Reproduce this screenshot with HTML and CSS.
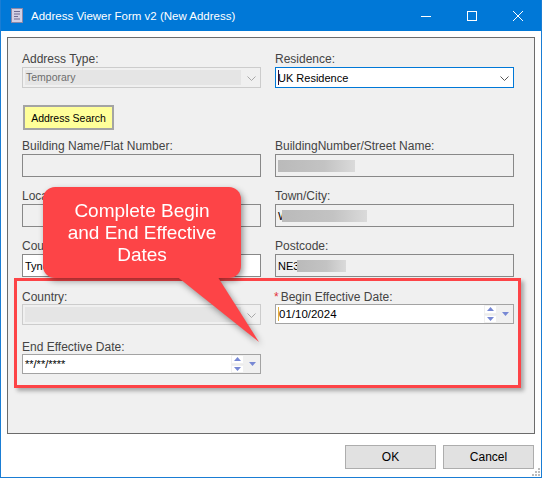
FILE: index.html
```html
<!DOCTYPE html>
<html>
<head>
<meta charset="utf-8">
<link rel="stylesheet" href="styles.css">
</head>
<body>
<div class="window">
  <div class="titlebar">
    <svg class="app-icon" width="12" height="15" viewBox="0 0 12 15">
      <rect x="0.5" y="0.5" width="11" height="14" fill="#d3d0e4" stroke="#8b88a8"/>
      <path d="M3 3.5h6M3 6h6M3 8.5h4M3 11h6" stroke="#6f6b92" stroke-width="1"/>
    </svg>
    <span class="title">Address Viewer Form v2 (New Address)</span>
    <div class="caption">
      <div class="cap-btn"><svg width="10" height="10" viewBox="0 0 10 10"><path d="M0 5.5h10" stroke="#fff"/></svg></div>
      <div class="cap-btn"><svg width="10" height="10" viewBox="0 0 10 10"><rect x="0.5" y="0.5" width="9" height="9" fill="none" stroke="#fff"/></svg></div>
      <div class="cap-btn"><svg width="10" height="10" viewBox="0 0 10 10"><path d="M0 0L10 10M10 0L0 10" stroke="#fff"/></svg></div>
    </div>
  </div>
  <div class="client">
    <div class="panel">
      <div class="row">
        <div class="field">
          <span class="lbl">Address Type:</span>
          <div class="combo disabled">
            <span class="val">Temporary</span>
            <svg class="chev" width="9" height="5" viewBox="0 0 9 5"><path d="M0.5 0.5L4.5 4.5L8.5 0.5" fill="none" stroke="#a8a8a8"/></svg>
          </div>
        </div>
        <div class="field">
          <span class="lbl">Residence:</span>
          <div class="combo active">
            <span class="caret"></span><span class="val">UK Residence</span>
            <svg class="chev" width="9" height="5" viewBox="0 0 9 5"><path d="M0.5 0.5L4.5 4.5L8.5 0.5" fill="none" stroke="#555"/></svg>
          </div>
        </div>
      </div>
      <div class="row r-btn">
        <div class="search-btn">Address Search</div>
      </div>
      <div class="row r-gap9">
        <div class="field">
          <span class="lbl">Building Name/Flat Number:</span>
          <div class="tb"></div>
        </div>
        <div class="field">
          <span class="lbl">BuildingNumber/Street Name:</span>
          <div class="tb"><span class="blur w77"></span></div>
        </div>
      </div>
      <div class="row r-gap12">
        <div class="field">
          <span class="lbl">Locality:</span>
          <div class="tb"></div>
        </div>
        <div class="field">
          <span class="lbl">Town/City:</span>
          <div class="tb">W<span class="blur w85 town"></span></div>
        </div>
      </div>
      <div class="row r-gap12">
        <div class="field">
          <span class="lbl">County:</span>
          <div class="tb white">Tyne and Wear</div>
        </div>
        <div class="field">
          <span class="lbl">Postcode:</span>
          <div class="tb">NE3<span class="blur w49 pc"></span></div>
        </div>
      </div>
      <div class="hl">
        <div class="row">
          <div class="field">
            <span class="lbl">Country:</span>
            <div class="combo disabled">
              <span class="val"></span>
              <svg class="chev" width="9" height="5" viewBox="0 0 9 5"><path d="M0.5 0.5L4.5 4.5L8.5 0.5" fill="none" stroke="#a8a8a8"/></svg>
            </div>
          </div>
          <div class="field">
            <span class="lbl"><span class="req">*</span>Begin Effective Date:</span>
            <div class="dp">
              <div class="txt big"><span class="caret2"></span>01/10/2024</div>
              <div class="spin">
                <div class="sb"><svg width="7" height="4" viewBox="0 0 7 4"><polygon points="3.5,0 7,4 0,4" fill="#7788d4"/></svg></div>
                <div class="sb"><svg width="7" height="4" viewBox="0 0 7 4"><polygon points="0,0 7,0 3.5,4" fill="#7788d4"/></svg></div>
              </div>
              <div class="dd"><svg width="7" height="4" viewBox="0 0 7 4"><polygon points="0,0 7,0 3.5,4" fill="#7788d4"/></svg></div>
            </div>
          </div>
        </div>
        <div class="row r-gap15">
          <div class="field">
            <span class="lbl">End Effective Date:</span>
            <div class="dp">
              <div class="txt">**/**/****</div>
              <div class="spin">
                <div class="sb"><svg width="7" height="4" viewBox="0 0 7 4"><polygon points="3.5,0 7,4 0,4" fill="#7788d4"/></svg></div>
                <div class="sb"><svg width="7" height="4" viewBox="0 0 7 4"><polygon points="0,0 7,0 3.5,4" fill="#7788d4"/></svg></div>
              </div>
              <div class="dd"><svg width="7" height="4" viewBox="0 0 7 4"><polygon points="0,0 7,0 3.5,4" fill="#7788d4"/></svg></div>
            </div>
          </div>
        </div>
      </div>
      <div class="callout">
        <svg class="tail" width="230" height="160" viewBox="0 0 230 160"><polygon points="127,84 171,84 216,155" fill="#fd4447"/></svg>
        <div class="callout-box">Complete Begin<br>and End Effective<br>Dates</div>
      </div>
    </div>
    <div class="actions">
      <div class="btn">OK</div>
      <div class="btn">Cancel</div>
    </div>
    <svg class="grip" width="10" height="10" viewBox="0 0 10 10">
      <rect x="7" y="1" width="2" height="2" fill="#bcbcbc"/>
      <rect x="4" y="4" width="2" height="2" fill="#bcbcbc"/>
      <rect x="7" y="4" width="2" height="2" fill="#bcbcbc"/>
      <rect x="1" y="7" width="2" height="2" fill="#bcbcbc"/>
      <rect x="4" y="7" width="2" height="2" fill="#bcbcbc"/>
      <rect x="7" y="7" width="2" height="2" fill="#bcbcbc"/>
    </svg>
  </div>
</div>
</body>
</html>
```
FILE: styles.css
```css
* { box-sizing: border-box; }
body { margin: 0; font-family: "Liberation Sans", Arial, sans-serif; background: #fff; }

.window {
  width: 542px; height: 478px;
  border: 1px solid #1a7dd4; border-top: 0;
  display: flex; flex-direction: column;
  background: #fff; position: relative;
}
.titlebar {
  height: 31px; background: #0078d7;
  display: flex; align-items: center; flex: 0 0 31px;
}
.app-icon { margin-left: 10px; flex: 0 0 auto; }
.title { margin-left: 8px; color: #fff; font-size: 11.5px; white-space: nowrap; }
.caption { margin-left: auto; display: flex; height: 31px; }
.cap-btn { width: 46px; height: 31px; display: flex; align-items: center; justify-content: center; }

.client { flex: 1; position: relative; }
.panel {
  margin: 6px 0 0 6px;
  width: 528px; height: 397px;
  border: 1px solid #6b6b6b; background: #f0f0f0;
  padding: 14px 20px 0 14px;
  position: relative;
}

.row { display: grid; grid-template-columns: 239px 239px; column-gap: 14px; }
.r-btn { margin-top: 17px; }
.r-gap9 { margin-top: 9px; }
.r-gap12 { margin-top: 12px; }
.r-gap15 { margin-top: 15px; }

.field { display: flex; flex-direction: column; }
.lbl {
  display: block; height: 14px; line-height: 14px;
  font-size: 12px; color: #444; margin-bottom: 1px; white-space: nowrap;
}
.hl .lbl { margin-bottom: 0; }
.req { color: #e3303a; margin-left: -1px; margin-right: 2px; }

.combo { height: 21px; border: 1px solid; display: flex; align-items: center; position: relative; }
.combo .chev { position: absolute; right: 4px; top: 8px; }
.combo.disabled { border-color: #cccccc; background: #f0f0f0; }
.combo.disabled .val {
  margin: 2px; width: 216px; height: 15px; background: #e5e5e5;
  font-size: 10.5px; color: #6d6d6d; line-height: 15px; padding-left: 1px;
}
.combo.active { border-color: #0078d7; background: #fff; padding-left: 2px; }
.combo.active .val { font-size: 11px; color: #000; }
.caret { width: 1px; height: 15px; background: #2a1040; margin-right: -1px; }

.search-btn {
  width: 91px; height: 25px; margin-left: 1px;
  background: #ffff99; border: 2px solid #a4a4a4;
  font-size: 10.5px; color: #000;
  display: flex; align-items: center; justify-content: center;
}

.tb {
  height: 23px; border: 1px solid #888; background: #f0f0f0;
  display: flex; align-items: center; padding-left: 2px;
  font-size: 11px; color: #000; white-space: nowrap; overflow: hidden;
}
.tb.white { background: #fff; }
.blur { display: inline-block; height: 12px; background: linear-gradient(90deg, #bababa, #c3c3c3 60%, #dadada); }
.w77 { width: 77px; }
.w85 { width: 85px; }
.w49 { width: 49px; }
.town { margin-left: -6px; }
.pc { margin-left: -2px; }

.hl {
  margin: 1px -7px 0 -8px;
  border: 3px solid #fd4447;
  padding: 9px 4px 11px 5px;
  box-shadow: 3px 3px 4px rgba(0, 0, 0, 0.3);
}

.dp { height: 20px; border: 1px solid #a3a3a3; background: #fff; display: flex; }
.dp .txt { flex: 1; font-size: 11px; line-height: 18px; padding-left: 2px; color: #000; display: flex; align-items: center; }
.dp .txt.big { font-size: 11.5px; }
.caret2 { width: 1px; height: 14px; background: #e0b040; margin-right: 0; }
.spin { width: 13px; display: flex; flex-direction: column; gap: 1px; background: #ececec; }
.sb { flex: 1; background: #fff; display: flex; align-items: center; justify-content: center; border: 1px solid #f0f0f0; }
.dd { width: 16px; background: #f0f0f0; display: flex; align-items: center; justify-content: center; }

.callout {
  position: absolute; left: 35px; top: 149px;
  width: 230px; height: 160px;
  filter: drop-shadow(2px 3px 3px rgba(0, 0, 0, 0.4));
  z-index: 5;
}
.tail { position: absolute; left: 0; top: 0; }
.callout-box {
  position: relative;
  width: 198px; height: 91px;
  background: #fd4447; border-radius: 12px;
  color: #fff; font-size: 19px; line-height: 22px;
  text-align: center; padding-top: 13px;
}

.actions { display: flex; justify-content: flex-end; gap: 7px; margin-top: 11px; padding-right: 7px; }
.btn {
  width: 91px; height: 24px;
  background: #e1e1e1; border: 1px solid #adadad;
  font-size: 12px; color: #000;
  display: flex; align-items: center; justify-content: center;
}
.grip { position: absolute; right: 0; bottom: 0; }
```
